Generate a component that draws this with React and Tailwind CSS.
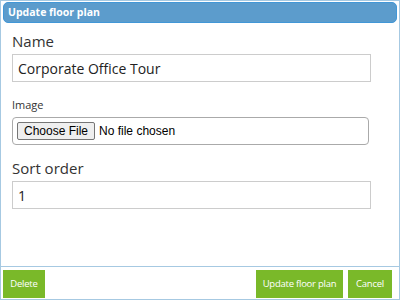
export default function App() {
  return (
    <div className="w-[400px] h-[300px] bg-white font-['Open_Sans',sans-serif] text-[#333]">
      <div className="h-full flex flex-col border border-[#a6c9e2] px-[2px] pt-[1px]">
        {/* Title bar */}
        <div className="h-[21px] flex items-center rounded-[5px] border border-[#4297d7] bg-[#5c9ccc] px-[4px]">
          <span className="text-[10.5px] font-bold text-white leading-none">Update floor plan</span>
        </div>

        {/* Body */}
        <div className="flex-1 px-[9px] pt-[8px]">
          <label className="block text-[15px] leading-[20px] text-[#333]">Name</label>
          <div className="mt-[3px] w-[359px] h-[28px] border border-[#ccc] flex items-center px-[5px] text-[14px] text-[#222]">
            Corporate Office Tour
          </div>

          <label className="block mt-[15px] text-[11px] leading-[15px] text-[#333]">Image</label>
          <div className="mt-[5px] w-[357px] h-[28px] border border-[#aaa] rounded-[4px] flex items-center px-[4px]">
            <span className="h-[18px] px-[6px] flex items-center border border-[#767676] rounded-[2px] bg-[#efefef] text-[12px] font-['Liberation_Sans',sans-serif] text-black">
              Choose File
            </span>
            <span className="ml-[4px] text-[12px] font-['Liberation_Sans',sans-serif] text-black">No file chosen</span>
          </div>

          <label className="block mt-[13px] text-[15px] leading-[20px] text-[#333]">Sort order</label>
          <div className="mt-[3px] w-[359px] h-[28px] border border-[#ccc] flex items-center px-[5px] text-[14px] text-[#222]">
            1
          </div>
        </div>

        {/* Footer */}
        <div className="border-t border-[#a6c9e2] -mx-[2px] px-[2px] pt-[3px] pb-[1px] flex items-center">
          <button className="h-[28px] w-[42px] bg-[#7ab929] text-white text-[9.5px] tracking-tight">Delete</button>
          <div className="flex-1" />
          <button className="h-[28px] w-[87px] bg-[#7ab929] text-white text-[9.5px] tracking-tight">Update floor plan</button>
          <button className="ml-[5px] mr-[5px] h-[28px] w-[44px] bg-[#7ab929] text-white text-[9.5px] tracking-tight">Cancel</button>
        </div>
      </div>
    </div>
  );
}
